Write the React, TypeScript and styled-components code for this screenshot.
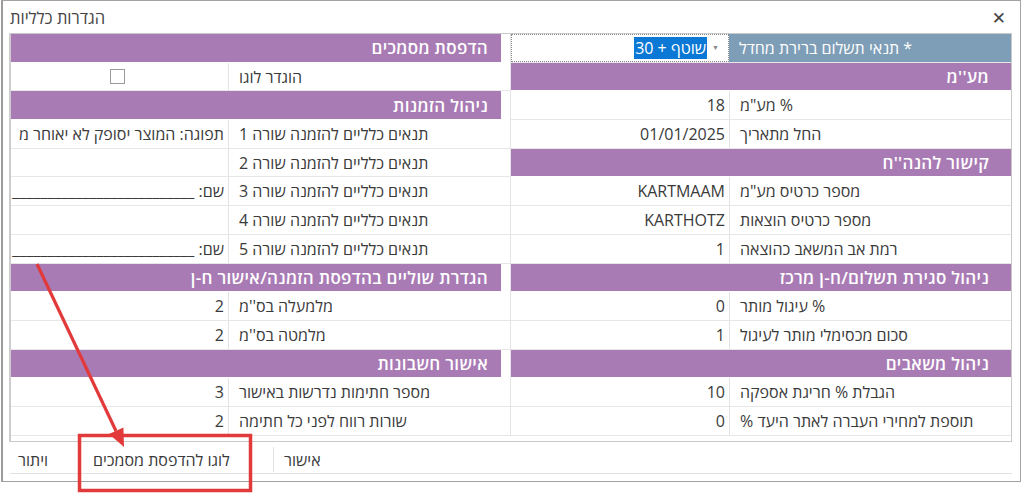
import React from 'react';
import styled, { createGlobalStyle } from 'styled-components';

const GlobalStyle = createGlobalStyle`
  html, body {
    margin: 0;
    padding: 0;
    background: #fff;
  }
  body {
    font-family: "Open Sans", "Liberation Sans", "DejaVu Sans", sans-serif;
    color: #3a3a3a;
  }
`;

const Page = styled.div`
  position: relative;
  width: 1024px;
  height: 494px;
  overflow: hidden;
`;

const Dialog = styled.div`
  direction: rtl;
  margin-left: 1px;
  width: 1020px;
  height: 482px;
  box-sizing: border-box;
  border: 1px solid #a3a3a3;
  border-left: 2px solid #9c9c9c;
  display: flex;
  flex-direction: column;
  background: #fff;
`;

const TitleBar = styled.div`
  direction: ltr;
  height: 32px;
  display: flex;
  align-items: center;
  justify-content: space-between;
  padding: 0 14px 0 7px;
`;

const Title = styled.span`
  font-size: 16.5px;
  color: #444;
`;

const Close = styled.span`
  font-size: 17px;
  font-weight: 700;
  color: #444;
  line-height: 1;
`;

const Table = styled.div`
  margin: 0 8px 0 6px;
  height: 409px;
  box-sizing: border-box;
  border: 1px solid #c9c9c9;
  border-left: 2px solid #cdcdcd;
  display: grid;
  grid-template-columns: 500px 1fr;
  align-content: start;
`;

const Section = styled.div<{ $gap?: boolean }>`
  display: flex;
  flex-direction: column;
  border-right: ${p => (p.$gap ? '1px solid #e4e4e4' : 'none')};
`;

const HeaderBar = styled.div<{ $gap?: boolean }>`
  height: 28.7px;
  box-sizing: border-box;
  display: flex;
  align-items: center;
  margin-right: ${p => (p.$gap ? '9px' : '0')};
  padding-right: ${p => (p.$gap ? '13px' : '22px')};
  background: #a97bb5;
  color: #fff;
  font-size: 17px;
  font-weight: 600;
  letter-spacing: 0.3px;
  border-bottom: 1px solid #fff;
  white-space: nowrap;
`;

const Row = styled.div`
  height: 28.7px;
  box-sizing: border-box;
  display: grid;
  grid-template-columns: 282px 1fr;
  border-bottom: 1px solid #e7e7e7;
`;

const Label = styled.div`
  display: flex;
  align-items: center;
  justify-content: flex-end;
  padding-left: 10px;
  border-left: 1px solid #e3e3e3;
  font-size: 16px;
  white-space: nowrap;
`;

const ComboLabel = styled(Label)`
  background: #7e9eb7;
  color: #fff;
  border-left: none;
`;

const Value = styled.div`
  display: flex;
  align-items: center;
  padding-right: 4px;
  font-size: 16px;
  white-space: nowrap;
  overflow: hidden;
`;

const ComboBox = styled.div`
  display: flex;
  align-items: center;
  border: 1px dotted #8a8a8a;
  background: #fff;
  font-size: 16px;
`;

const ComboArrow = styled.span`
  font-size: 7px;
  color: #888;
  margin: 0 9px 0 5px;
`;

const Selected = styled.span`
  background: #0a78d4;
  color: #fff;
  padding: 0 1px;
  line-height: 22px;
`;

const Box = styled.span`
  width: 15px;
  height: 15px;
  box-sizing: border-box;
  border: 1px solid #9a9a9a;
  background: #fff;
  margin: 0 auto;
`;

const Footer = styled.div`
  margin: 4px 8px 0 7px;
  height: 27px;
  border-bottom: 1px solid #e3e3e3;
  display: flex;
  justify-content: flex-end;
  align-items: stretch;
`;

const FooterButton = styled.div<{ $width: number; $left: number; $sep?: boolean }>`
  width: ${p => p.$width}px;
  box-sizing: border-box;
  display: flex;
  align-items: center;
  justify-content: flex-end;
  font-size: 16px;
  color: #3a3a3a;
  padding-left: ${p => p.$left}px;
  border-left: ${p => (p.$sep ? '1px solid #e0e0e0' : 'none')};
  margin: 1px 0;
  white-space: nowrap;
`;

const Overlay = styled.svg`
  position: absolute;
  top: 0;
  left: 0;
  pointer-events: none;
`;

type Item =
  | { kind: 'head'; text: string }
  | { kind: 'row'; label: string; value?: string }
  | { kind: 'check'; label: string }
  | { kind: 'combo' };

const right: Item[] = [
  { kind: 'combo' },
  { kind: 'head', text: "מע''מ" },
  { kind: 'row', label: '% מע"מ', value: '18' },
  { kind: 'row', label: 'החל מתאריך', value: '01/01/2025' },
  { kind: 'head', text: "קישור להנה''ח" },
  { kind: 'row', label: 'מספר כרטיס מע"מ', value: 'KARTMAAM' },
  { kind: 'row', label: 'מספר כרטיס הוצאות', value: 'KARTHOTZ' },
  { kind: 'row', label: 'רמת אב המשאב כהוצאה', value: '1' },
  { kind: 'head', text: 'ניהול סגירת תשלום/ח-ן מרכז' },
  { kind: 'row', label: '% עיגול מותר', value: '0' },
  { kind: 'row', label: 'סכום מכסימלי מותר לעיגול', value: '1' },
  { kind: 'head', text: 'ניהול משאבים' },
  { kind: 'row', label: 'הגבלת % חריגת אספקה', value: '10' },
  { kind: 'row', label: 'תוספת למחירי העברה לאתר היעד %', value: '0' },
];

const blank = 'שם: __________________________';

const left: Item[] = [
  { kind: 'head', text: 'הדפסת מסמכים' },
  { kind: 'check', label: 'הוגדר לוגו' },
  { kind: 'head', text: 'ניהול הזמנות' },
  { kind: 'row', label: 'תנאים כלליים להזמנה שורה 1', value: 'תפוגה: המוצר יסופק לא יאוחר מ' },
  { kind: 'row', label: 'תנאים כלליים להזמנה שורה 2', value: '' },
  { kind: 'row', label: 'תנאים כלליים להזמנה שורה 3', value: blank },
  { kind: 'row', label: 'תנאים כלליים להזמנה שורה 4', value: '' },
  { kind: 'row', label: 'תנאים כלליים להזמנה שורה 5', value: blank },
  { kind: 'head', text: 'הגדרת שוליים בהדפסת הזמנה/אישור ח-ן' },
  { kind: 'row', label: "מלמעלה בס''מ", value: '2' },
  { kind: 'row', label: "מלמטה בס''מ", value: '2' },
  { kind: 'head', text: 'אישור חשבונות' },
  { kind: 'row', label: 'מספר חתימות נדרשות באישור', value: '3' },
  { kind: 'row', label: 'שורות רווח לפני כל חתימה', value: '2' },
];

const renderItem = (item: Item, i: number, gap?: boolean) => {
  switch (item.kind) {
    case 'head':
      return <HeaderBar key={i} $gap={gap}>{item.text}</HeaderBar>;
    case 'combo':
      return (
        <Row key={i}>
          <ComboLabel>* תנאי תשלום ברירת מחדל</ComboLabel>
          <ComboBox>
            <ComboArrow>▼</ComboArrow>
            <Selected>שוטף + 30</Selected>
          </ComboBox>
        </Row>
      );
    case 'check':
      return (
        <Row key={i}>
          <Label>{item.label}</Label>
          <Value><Box /></Value>
        </Row>
      );
    default:
      return (
        <Row key={i}>
          <Label>{item.label}</Label>
          <Value>{item.value}</Value>
        </Row>
      );
  }
};

export default function App() {
  return (
    <Page>
      <GlobalStyle />
      <Dialog>
        <TitleBar>
          <Title>הגדרות כלליות</Title>
          <Close>✕</Close>
        </TitleBar>
        <Table>
          <Section>{right.map((it, i) => renderItem(it, i))}</Section>
          <Section $gap>{left.map((it, i) => renderItem(it, i, true))}</Section>
        </Table>
        <Footer>
          <FooterButton $width={62} $left={10} $sep>אישור</FooterButton>
          <FooterButton $width={195} $left={15}>לוגו להדפסת מסמכים</FooterButton>
          <FooterButton $width={68} $left={8}>ויתור</FooterButton>
        </Footer>
      </Dialog>
      <Overlay width="1024" height="494" viewBox="0 0 1024 494">
        <line x1="37" y1="264" x2="116" y2="431" stroke="#e23a3a" strokeWidth="3.2" />
        <polygon points="124,447 109,434 123.4,427.4" fill="#e23a3a" />
        <rect x="79.5" y="435.5" width="171" height="55" fill="none" stroke="#e23a3a" strokeWidth="3.5" />
      </Overlay>
    </Page>
  );
}
